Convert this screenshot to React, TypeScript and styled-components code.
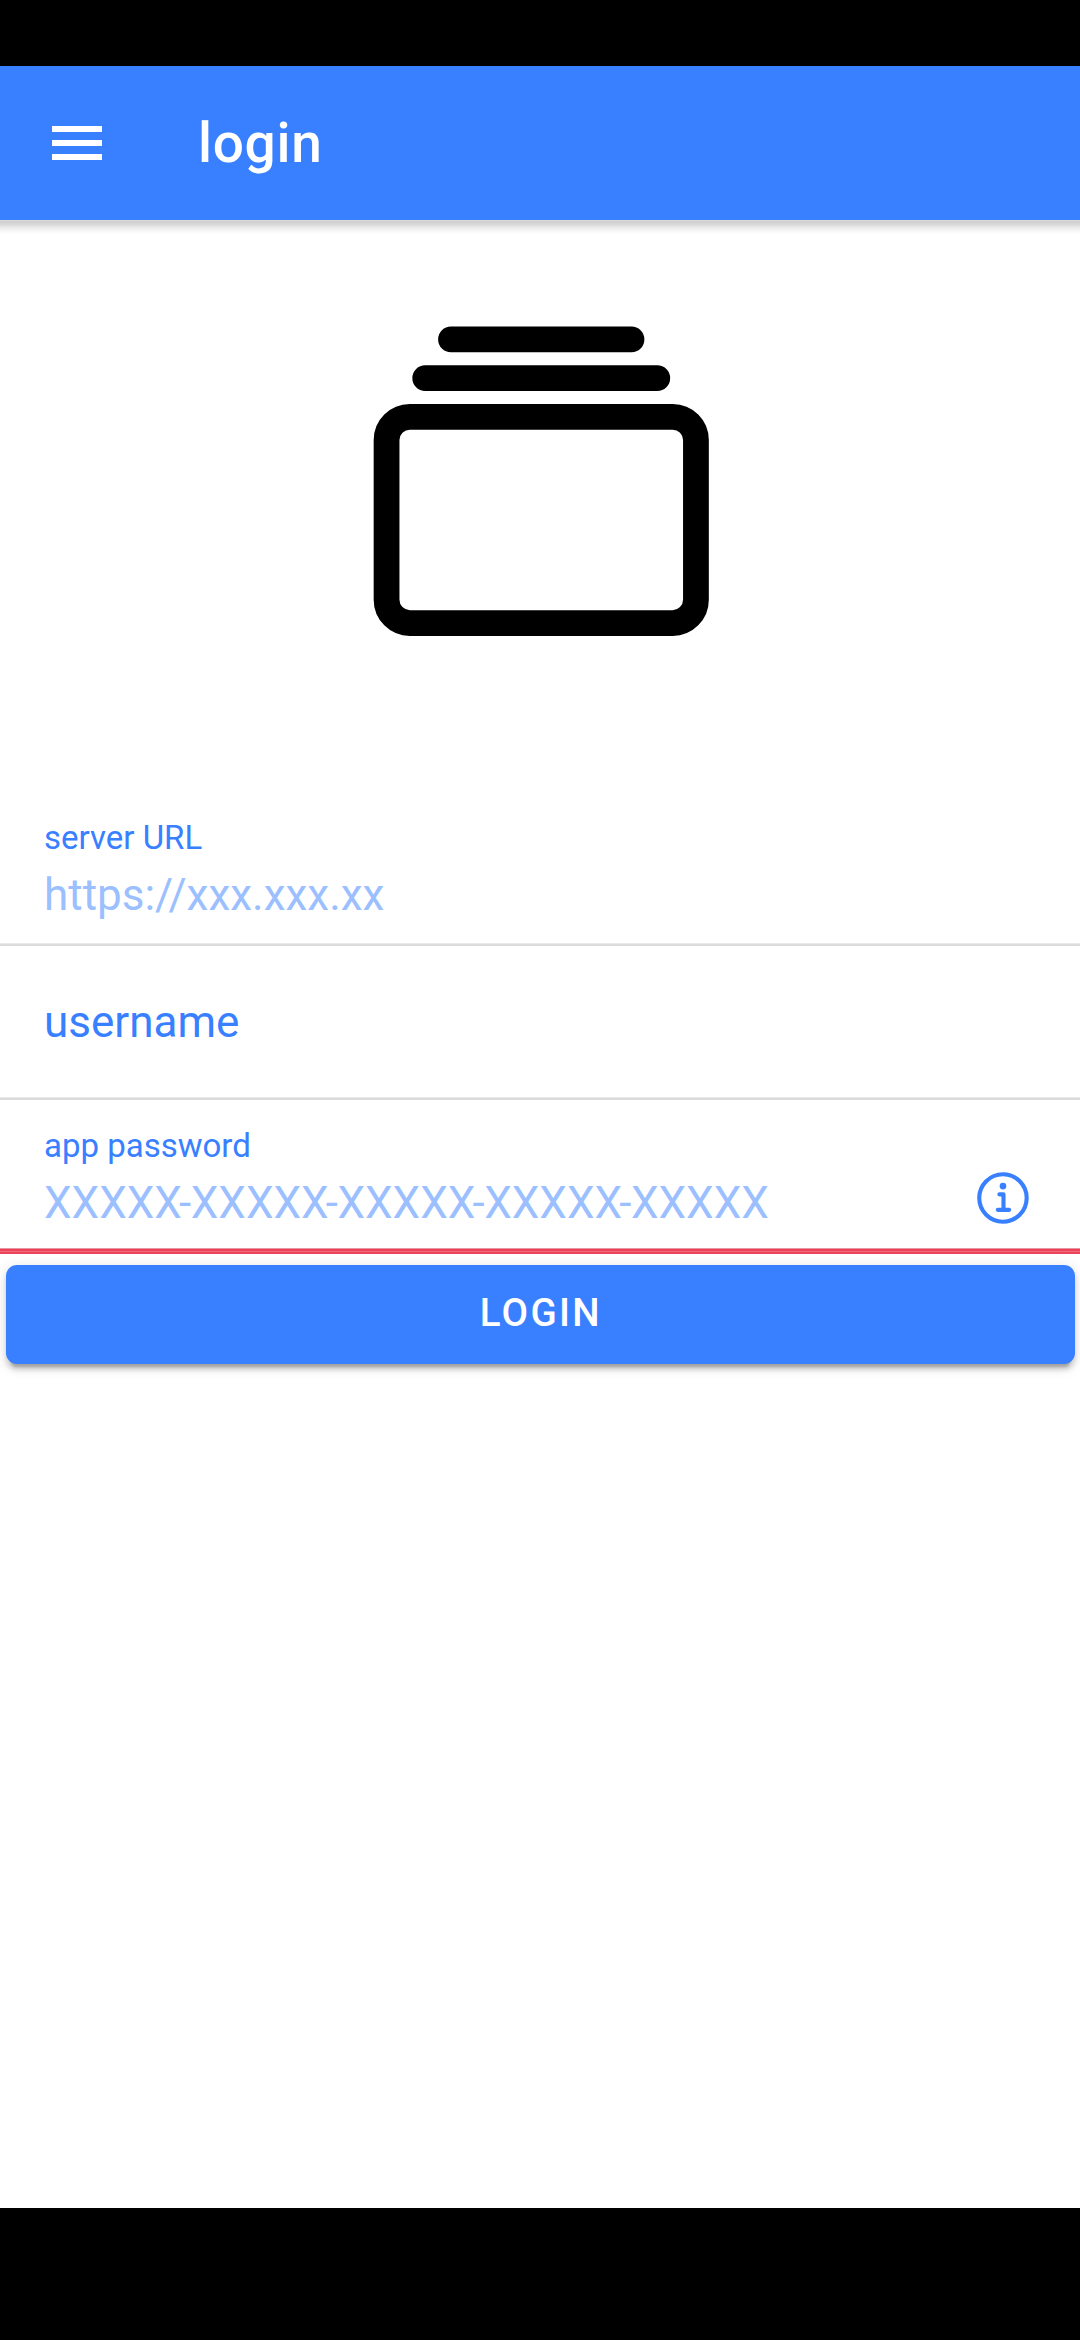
import React from "react";
import styled, { createGlobalStyle } from "styled-components";

const GlobalStyle = createGlobalStyle`
  html, body { margin: 0; padding: 0; background: #fff; }
  * { box-sizing: border-box; }
`;

const Screen = styled.div`
  width: 1080px;
  height: 2340px;
  display: flex;
  flex-direction: column;
  overflow: hidden;
  background: #fff;
  color: #3880ff;
  font-family: Roboto, "Noto Sans", sans-serif;
`;

const SystemBar = styled.div<{ $height: number }>`
  flex: none;
  height: ${(p) => p.$height}px;
  background: #000;
`;

const Toolbar = styled.header`
  flex: none;
  height: 154px;
  display: flex;
  align-items: center;
  gap: 88px;
  padding-left: 44px;
  background: #3880ff;
  color: #fff;
`;

const MenuButton = styled.button`
  display: flex;
  padding: 0;
  border: 0;
  background: none;
  color: inherit;
`;

const Title = styled.h1`
  margin: 0;
  font-size: 55px;
  font-weight: 500;
  letter-spacing: 0.0125em;
  line-height: 64px;
`;

const Content = styled.main`
  flex: 1;
  display: flex;
  flex-direction: column;
  background: linear-gradient(
      #dadada 0 1px,
      #cecece 1px,
      #d6d6d6 4px,
      #e8e8e8 7px,
      #f7f7f7 11px,
      #fff 14px
    )
    top / 100% 14px no-repeat;
`;

const LogoArea = styled.div`
  height: 572px;
  padding: 55px 0 0 3px;
  display: flex;
  justify-content: center;
  align-items: flex-start;
  color: #000;
`;

const Item = styled.label<{ $invalid?: boolean }>`
  height: 154px;
  display: flex;
  align-items: stretch;
  justify-content: space-between;
  padding: 0 43px 0 44px;
  background: ${(p) =>
    p.$invalid
      ? "linear-gradient(#e995a1 0 1px, #eb445a 1px 3px, #f0697b 3px 4px, #eb445a 4px 6px) bottom / 100% 6px no-repeat"
      : "linear-gradient(#e8e8e8 0 1px, #dbdbdb 1px 3px) bottom / 100% 3px no-repeat"};
`;

const FieldText = styled.div`
  display: flex;
  flex-direction: column;
  padding-top: 26px;
  gap: 12px;
`;

const FloatingLabel = styled.span`
  font-size: 33px;
  line-height: 39px;
`;

const Placeholder = styled.span`
  font-size: 44px;
  line-height: 52px;
  color: #9bbfff;
`;

const Hyphen = styled.span`
  margin: 0 -0.5px 0 -2.9px;
`;

const RestingLabel = styled.span`
  padding-top: 50px;
  font-size: 44px;
  line-height: 52px;
`;

const InfoSlot = styled.span`
  display: flex;
  padding-top: 66px;
`;

const LoginButton = styled.button`
  height: 99px;
  margin: 11px 5px 11px 5.5px;
  padding: 0 0 4px 1px;
  border: 0;
  border-radius: 11px;
  background: #3880ff;
  color: #fff;
  font-family: inherit;
  font-size: 38.5px;
  font-weight: 500;
  letter-spacing: 0.06em;
  line-height: 45px;
  text-transform: uppercase;
  box-shadow: 0 8.25px 2.75px -5.5px rgba(0, 0, 0, 0.2),
    0 5.5px 5.5px 0 rgba(0, 0, 0, 0.14), 0 2.75px 13.75px 0 rgba(0, 0, 0, 0.12);
`;

const MenuIcon = () => (
  <svg width="66" height="66" viewBox="0 0 66 66" fill="currentColor">
    <path d="M8 16h50v6H8zM8 30h50v6H8zM8 44h50v6H8z" />
  </svg>
);

const AlbumsIcon = () => (
  <svg
    width="412.5"
    height="412.5"
    viewBox="0 0 512 512"
    fill="none"
    stroke="currentColor"
    strokeWidth="32"
    strokeLinecap="round"
  >
    <rect x="64" y="176" width="384" height="256" rx="28.87" ry="28.87" />
    <path d="M144 80h224M112 128h288" />
  </svg>
);

const InfoIcon = () => (
  <svg
    width="66"
    height="66"
    viewBox="0 0 512 512"
    fill="none"
    stroke="currentColor"
    strokeWidth="32"
  >
    <path
      d="M248 64C146.39 64 64 146.39 64 248s82.39 184 184 184 184-82.39 184-184S349.61 64 248 64z"
      strokeMiterlimit="10"
    />
    <path d="M220 220h32v116" strokeLinecap="round" strokeLinejoin="round" />
    <path d="M208 340h88" strokeLinecap="round" />
    <path
      d="M248 130a26 26 0 1026 26 26 26 0 00-26-26z"
      fill="currentColor"
      stroke="none"
    />
  </svg>
);

const passwordGroups = ["XXXXX", "XXXXX", "XXXXX", "XXXXX", "XXXXX"];

export default function App() {
  return (
    <Screen>
      <GlobalStyle />
      <SystemBar $height={66} />
      <Toolbar>
        <MenuButton>
          <MenuIcon />
        </MenuButton>
        <Title>login</Title>
      </Toolbar>
      <Content>
        <LogoArea>
          <AlbumsIcon />
        </LogoArea>
        <Item>
          <FieldText>
            <FloatingLabel>server URL</FloatingLabel>
            <Placeholder>https://xxx.xxx.xx</Placeholder>
          </FieldText>
        </Item>
        <Item>
          <RestingLabel>username</RestingLabel>
        </Item>
        <Item $invalid>
          <FieldText>
            <FloatingLabel>app password</FloatingLabel>
            <Placeholder>
              {passwordGroups.map((group, i) => (
                <React.Fragment key={i}>
                  {i > 0 && <Hyphen>-</Hyphen>}
                  {group}
                </React.Fragment>
              ))}
            </Placeholder>
          </FieldText>
          <InfoSlot>
            <InfoIcon />
          </InfoSlot>
        </Item>
        <LoginButton>login</LoginButton>
      </Content>
      <SystemBar $height={132} />
    </Screen>
  );
}
